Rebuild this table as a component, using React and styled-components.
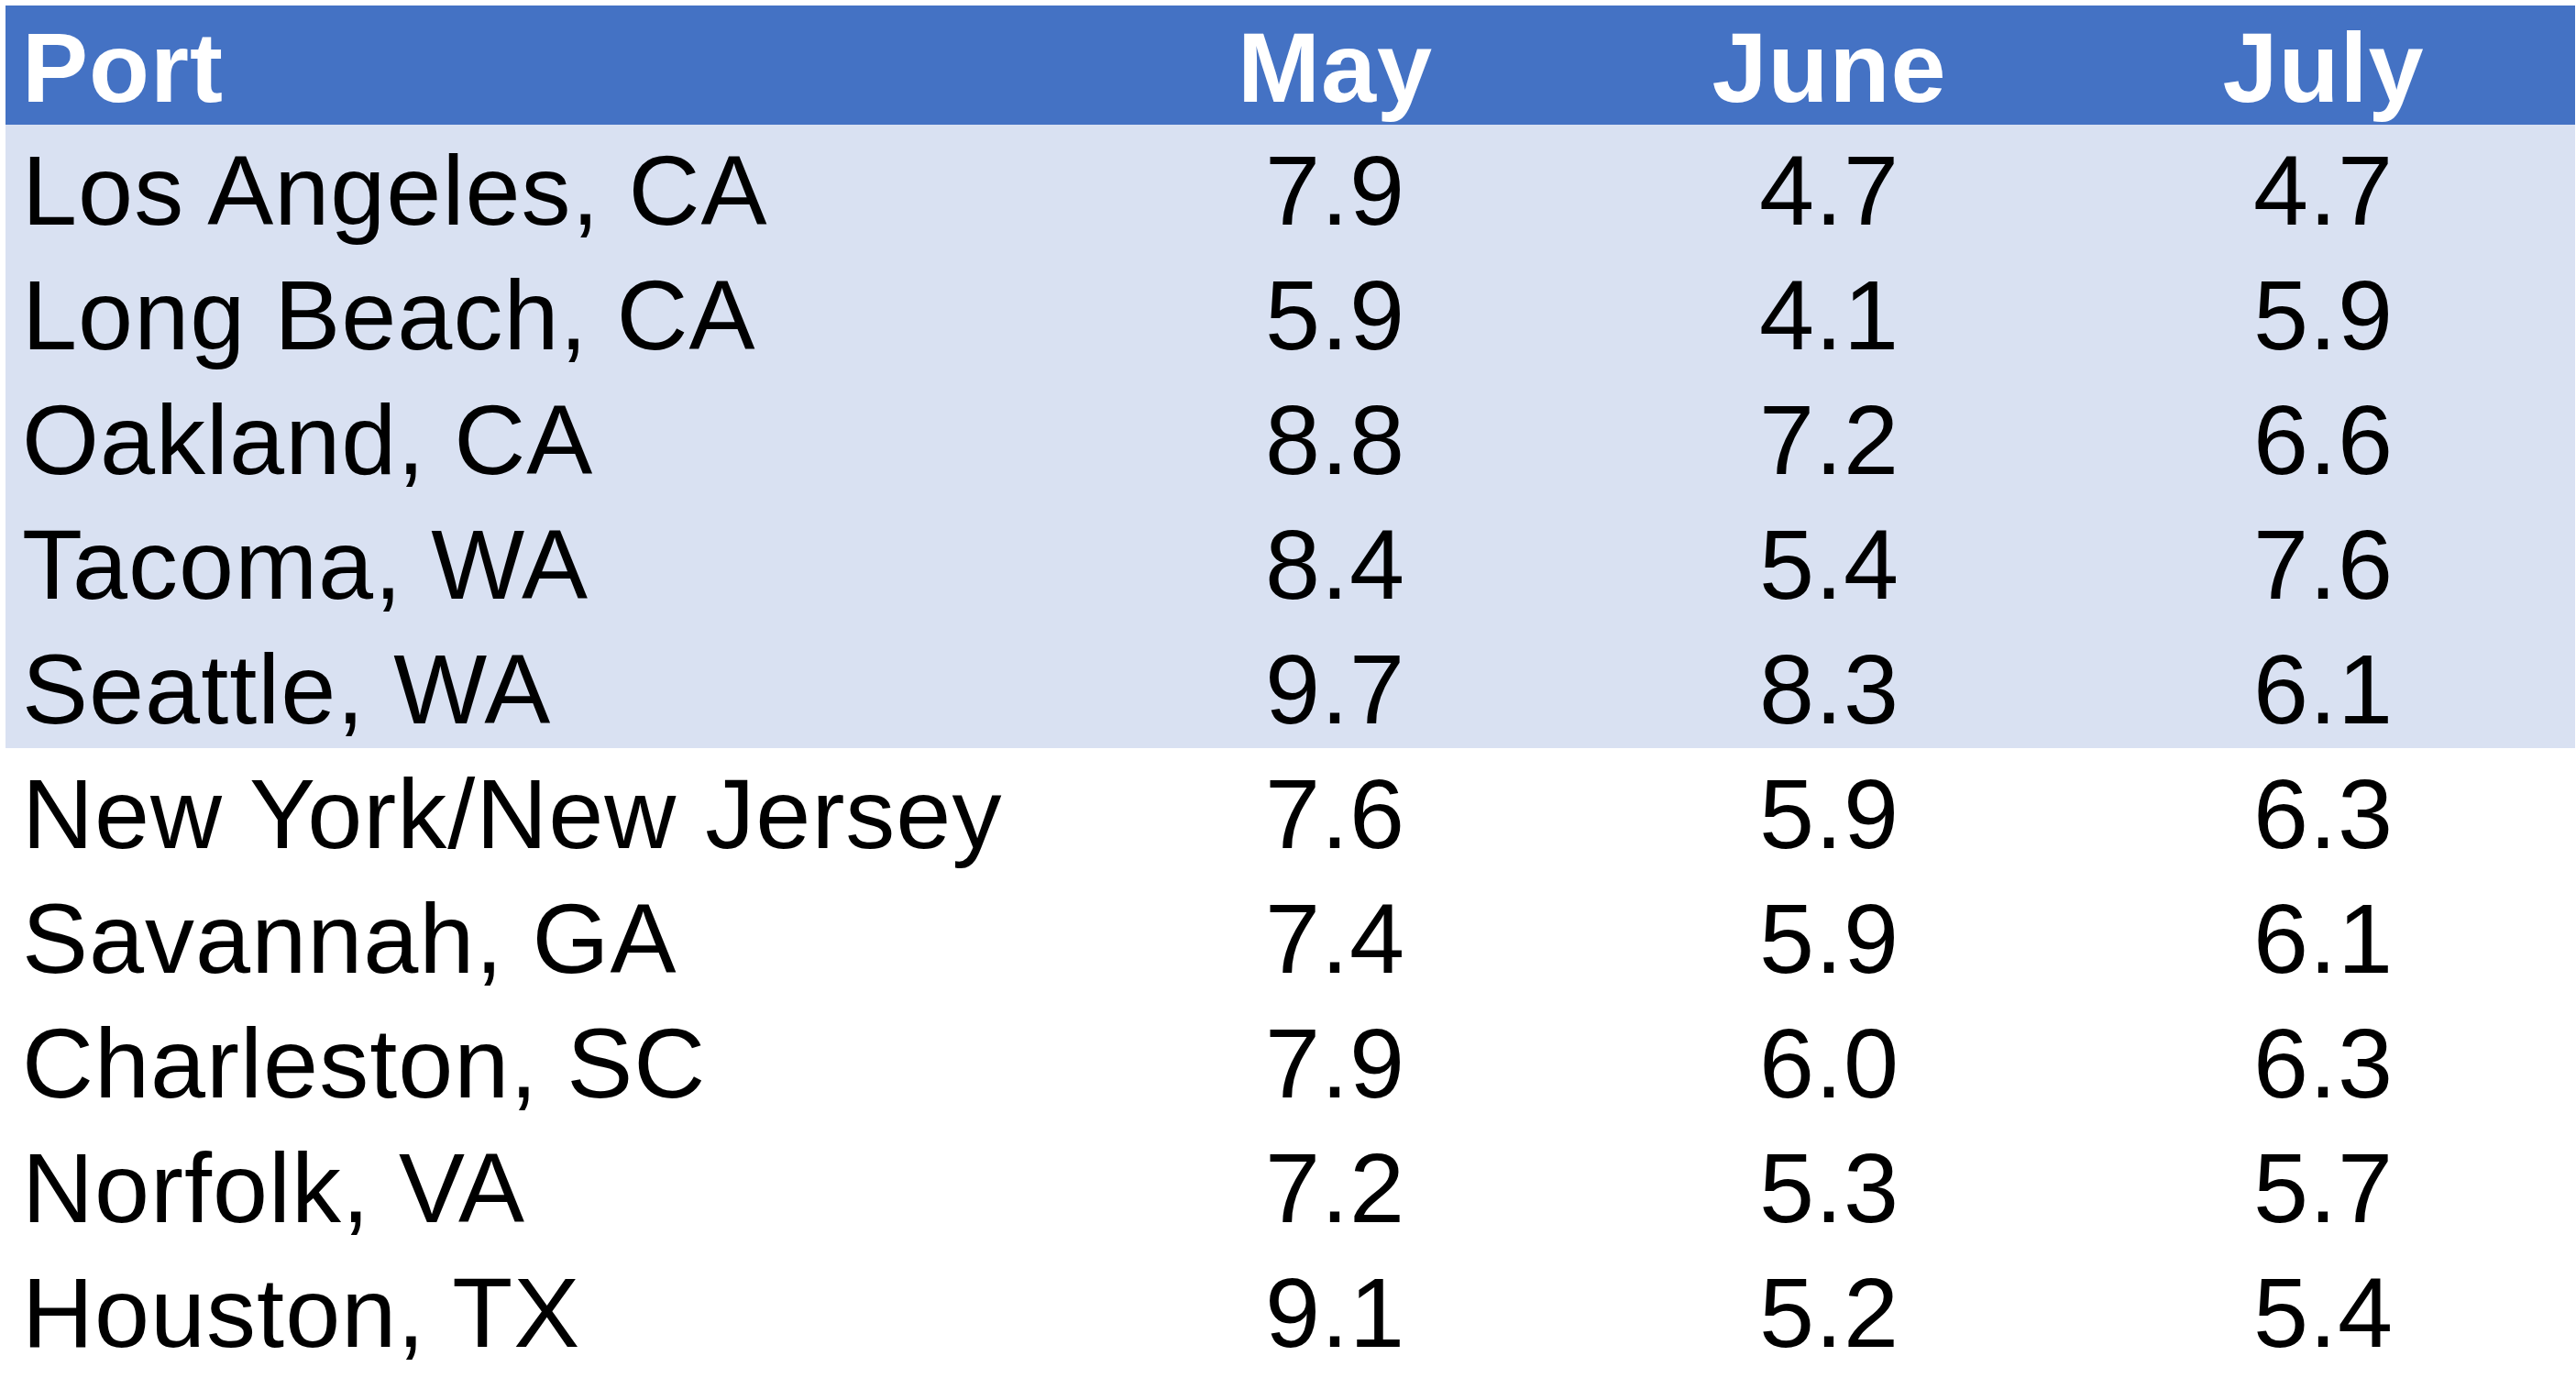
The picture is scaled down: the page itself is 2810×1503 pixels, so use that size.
import React from "react";
import styled, { createGlobalStyle } from "styled-components";

const GlobalStyle = createGlobalStyle`
  html, body {
    margin: 0;
    padding: 0;
    background: #ffffff;
  }
  body {
    font-family: "Liberation Sans", Arial, sans-serif;
  }
`;

const Page = styled.div`
  padding: 6px 0 0 6px;
`;

const Table = styled.div`
  width: 2803px;
  display: flex;
  flex-direction: column;
`;

const Row = styled.div`
  display: grid;
  grid-template-columns: 1181px 539px 539px 1fr;
  height: ${({ $header }) => ($header ? "130px" : "136px")};
  background: ${({ $header, $highlight }) =>
    $header ? "#4472c4" : $highlight ? "#d9e1f2" : "#ffffff"};
  color: ${({ $header }) => ($header ? "#ffffff" : "#000000")};
  font-weight: ${({ $header }) => ($header ? 700 : 400)};
`;

const Cell = styled.div`
  font-size: 108px;
  line-height: 121px;
  letter-spacing: 1px;
  padding-top: ${({ $header }) => ($header ? "7px" : "11px")};
  padding-left: ${({ $name }) => ($name ? "18px" : "0")};
  text-align: ${({ $name }) => ($name ? "left" : "center")};
  padding-right: ${({ $last }) => ($last ? "5px" : "0")};
  white-space: nowrap;
`;

const months = ["May", "June", "July"];

const ports = [
  { name: "Los Angeles, CA", values: ["7.9", "4.7", "4.7"], highlight: true },
  { name: "Long Beach, CA", values: ["5.9", "4.1", "5.9"], highlight: true },
  { name: "Oakland, CA", values: ["8.8", "7.2", "6.6"], highlight: true },
  { name: "Tacoma, WA", values: ["8.4", "5.4", "7.6"], highlight: true },
  { name: "Seattle, WA", values: ["9.7", "8.3", "6.1"], highlight: true },
  { name: "New York/New Jersey", values: ["7.6", "5.9", "6.3"] },
  { name: "Savannah, GA", values: ["7.4", "5.9", "6.1"] },
  { name: "Charleston, SC", values: ["7.9", "6.0", "6.3"] },
  { name: "Norfolk, VA", values: ["7.2", "5.3", "5.7"] },
  { name: "Houston, TX", values: ["9.1", "5.2", "5.4"] },
];

export default function App() {
  return (
    <Page>
      <GlobalStyle />
      <Table>
        <Row $header>
          <Cell $header $name>Port</Cell>
          {months.map((m, i) => (
            <Cell $header key={m} $last={i === months.length - 1}>
              {m}
            </Cell>
          ))}
        </Row>
        {ports.map((p) => (
          <Row key={p.name} $highlight={p.highlight}>
            <Cell $name>{p.name}</Cell>
            {p.values.map((v, i) => (
              <Cell key={i} $last={i === p.values.length - 1}>
                {v}
              </Cell>
            ))}
          </Row>
        ))}
      </Table>
    </Page>
  );
}
